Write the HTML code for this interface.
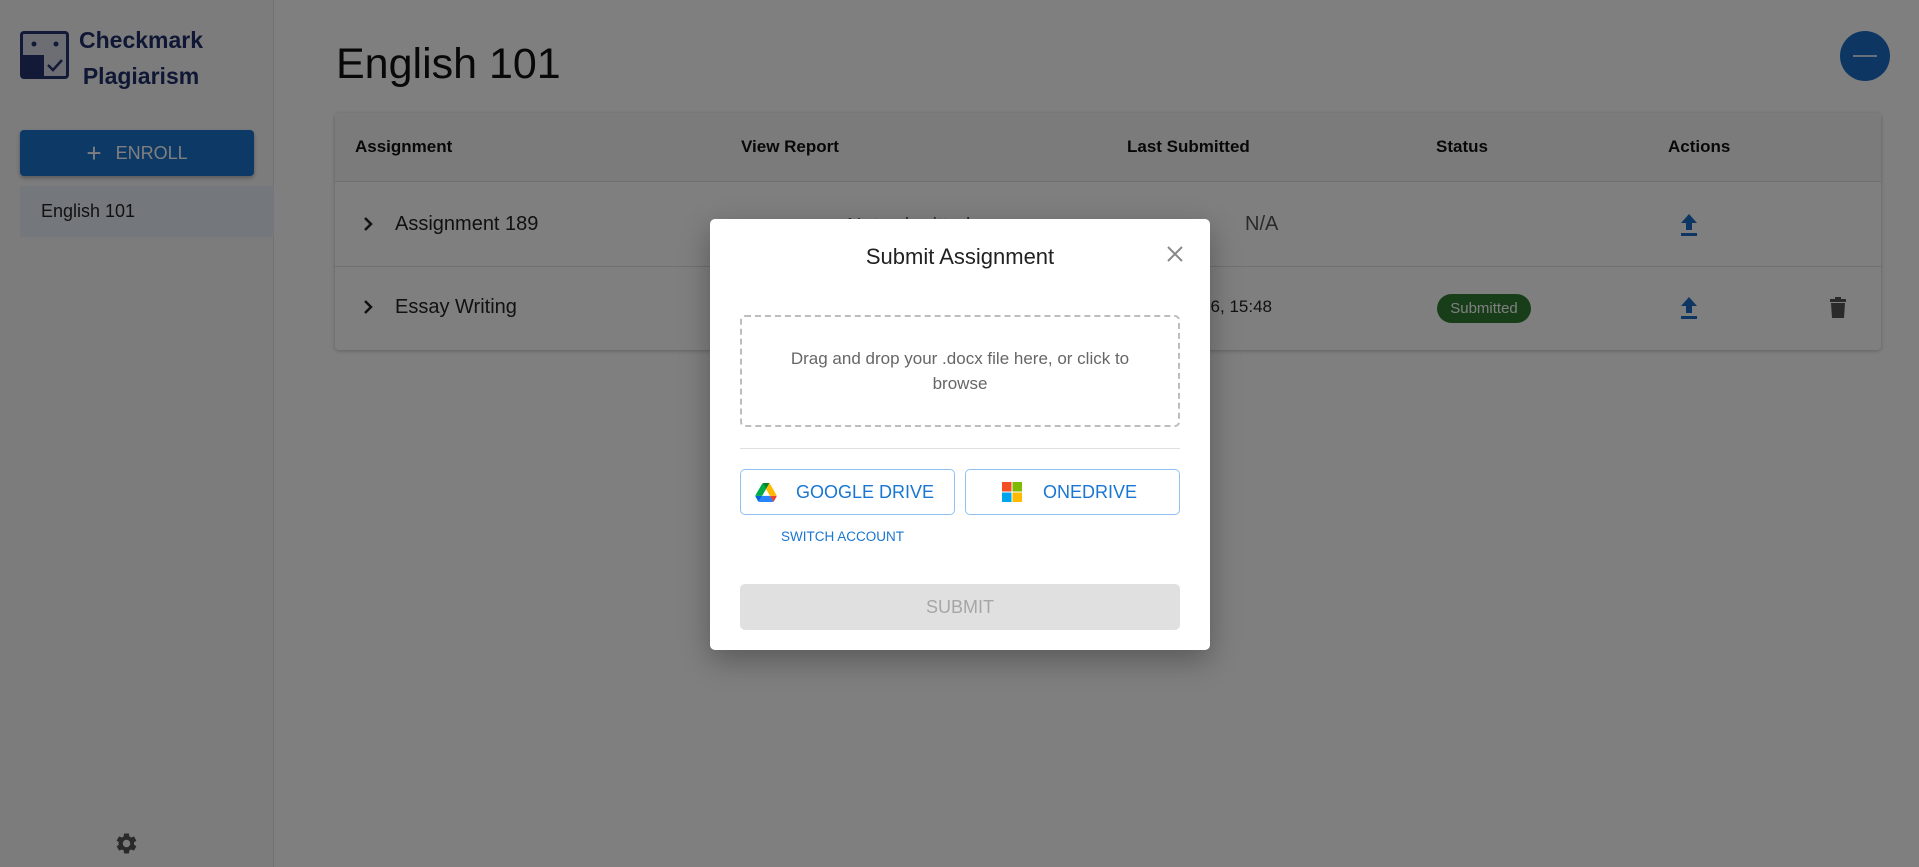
<!DOCTYPE html>
<html><head><meta charset="utf-8"><style>
*{margin:0;padding:0;box-sizing:border-box}
body{width:1919px;height:867px;position:relative;overflow:hidden;background:#fff;font-family:"Liberation Sans",Arial,sans-serif;color:#222}
.a{position:absolute}
.side{left:0;top:0;width:274px;height:867px;background:#f8f9fb;border-right:1px solid #e0e0e0}
.th{font-weight:bold;font-size:17px;color:#111;top:137px}
.cell{font-size:20px;color:#222}
.ov{left:0;top:0;width:1919px;height:867px;background:rgba(0,0,0,0.5)}
.modal{left:710px;top:219px;width:500px;height:431px;background:#fff;border-radius:5px;box-shadow:0 10px 30px rgba(0,0,0,.3)}
.btn{border:1px solid #90c2f0;border-radius:5px;height:46px;top:250px;color:#1976d2;font-size:18px;display:flex;align-items:center;white-space:nowrap}
</style></head><body>
<div class="a side"></div>
<svg class="a" style="left:20px;top:31px" width="49" height="48" viewBox="0 0 49 48">
<rect x="0" y="0" width="49" height="48" rx="4" fill="#24356f"/>
<rect x="3" y="3" width="43" height="42" rx="1" fill="#d9dde8"/>
<rect x="3" y="24" width="21" height="21" fill="#24356f"/>
<circle cx="14" cy="13" r="2.5" fill="#24356f"/><circle cx="36" cy="13" r="2.5" fill="#24356f"/>
<path d="M28 34 l5 5 l9 -10" stroke="#24356f" stroke-width="2.5" fill="none"/>
</svg>
<div class="a" style="left:79px;top:22px;line-height:36px;color:#1e2f6b;text-align:center;font-size:23px;font-weight:bold">Checkmark<br>Plagiarism</div>
<div class="a" style="left:20px;top:130px;width:234px;height:46px;background:#1a73cc;border-radius:4px;box-shadow:0 2px 4px rgba(0,0,0,.3);color:#fff;font-size:18px;display:flex;align-items:center;justify-content:center"><span style="font-size:26px;margin-right:14px;font-weight:300">+</span>ENROLL</div>
<div class="a" style="left:20px;top:186px;width:254px;height:51px;background:#e9f1fa"></div>
<div class="a" style="left:41px;top:186px;line-height:51px;font-size:18px;color:#222">English 101</div>
<svg class="a" style="left:114px;top:831px" width="25" height="25" viewBox="0 0 24 24"><path fill="#555" d="M19.14 12.94c.04-.3.06-.61.06-.94 0-.32-.02-.64-.07-.94l2.03-1.58a.49.49 0 0 0 .12-.61l-1.92-3.32a.49.49 0 0 0-.59-.22l-2.390.96c-.5-.38-1.03-.7-1.62-.94l-.36-2.54a.48.48 0 0 0-.48-.41h-3.84c-.24 0-.43.17-.47.41l-.36 2.54c-.59.24-1.13.57-1.62.94l-2.39-.96a.49.49 0 0 0-.59.22L2.74 8.87c-.12.21-.8.47.12.61l2.03 1.58c-.5.3-.7.63-.7.94s.2.64.7.94l-2.03 1.58a.49.49 0 0 0-.12.61l1.92 3.32c.12.22.37.29.59.22l2.39-.96c.5.38 1.03.7 1.62.94l.36 2.54c.5.24.24.41.48.41h3.840c.24 0 .44-.17.47-.41l.36-2.54c.59-.24 1.13-.56 1.62-.94l2.39.96c.22.08.47 0 .59-.22l1.92-3.32c.12-.22.07-.47-.12-.61l-2.01-1.58zM12 15.6A3.6 3.6 0 1 1 12 8.4a3.6 3.6 0 0 1 0 7.2z"/></svg>

<div class="a" style="left:336px;top:40px;font-size:43px;color:#111">English 101</div>
<div class="a" style="left:1840px;top:31px;width:50px;height:50px;border-radius:50%;background:#1a6fc4"><div class="a" style="left:13px;top:24px;width:24px;height:2px;background:#cfe0f5"></div></div>

<div class="a" style="left:335px;top:113px;width:1546px;height:237px;background:#fff;border-radius:4px;box-shadow:0 1px 4px rgba(0,0,0,.25)">
<div class="a" style="left:0;top:0;width:100%;height:69px;background:#f7f7f7;border-bottom:1px solid #e0e0e0"></div>
<div class="a" style="left:0;top:153px;width:100%;height:1px;background:#e0e0e0"></div>
</div>
<div class="a th" style="left:355px">Assignment</div>
<div class="a th" style="left:741px">View Report</div>
<div class="a th" style="left:1127px">Last Submitted</div>
<div class="a th" style="left:1436px">Status</div>
<div class="a th" style="left:1668px">Actions</div>
<svg class="a" style="left:362px;top:215px" width="14" height="18" viewBox="0 0 14 18"><path d="M3 3l6 6-6 6" stroke="#222" stroke-width="2.5" fill="none"/></svg>
<svg class="a" style="left:362px;top:298px" width="14" height="18" viewBox="0 0 14 18"><path d="M3 3l6 6-6 6" stroke="#222" stroke-width="2.5" fill="none"/></svg>
<div class="a cell" style="left:395px;top:213px">Assignment 189</div>
<div class="a cell" style="left:395px;top:296px">Essay Writing</div>
<div class="a cell" style="left:847px;top:215px;color:#555">Not submitted</div>
<div class="a cell" style="left:1245px;top:213px;color:#555">N/A</div>
<div class="a" style="left:1100px;top:297px;width:172px;text-align:right;font-size:17px;color:#222">06/03/2026, 15:48</div>
<div class="a" style="left:1437px;top:294px;width:94px;height:29px;border-radius:15px;background:#2e7d32;color:#fff;font-size:15px;text-align:center;line-height:29px">Submitted</div>
<svg class="a" style="left:1678px;top:212px" width="22" height="26" viewBox="0 0 22 26"><path d="M11 2l-8 9h5v7h6v-7h5z" fill="#1a6fc4"/><rect x="3" y="21" width="16" height="3" fill="#1a6fc4"/></svg>
<svg class="a" style="left:1678px;top:295px" width="22" height="26" viewBox="0 0 22 26"><path d="M11 2l-8 9h5v7h6v-7h5z" fill="#1a6fc4"/><rect x="3" y="21" width="16" height="3" fill="#1a6fc4"/></svg>
<svg class="a" style="left:1829px;top:296px" width="18" height="24" viewBox="0 0 18 24"><rect x="1" y="3" width="16" height="3" fill="#555"/><rect x="6" y="1" width="6" height="3" fill="#555"/><path d="M2 7h14l-1 15H3z" fill="#555"/></svg>

<div class="a ov"></div>

<div class="a modal">
<div class="a" style="left:0;top:25px;width:100%;text-align:center;font-size:22px;color:#222">Submit Assignment</div>
<svg class="a" style="left:455px;top:25px" width="20" height="20" viewBox="0 0 20 20"><path d="M3 3l14 14M17 3L3 17" stroke="#888" stroke-width="2"/></svg>
<div class="a" style="left:30px;top:96px;width:440px;height:112px;border:2px dashed #bdbdbd;border-radius:5px;display:flex;align-items:center;justify-content:center;text-align:center;font-size:17px;line-height:25px;color:#666;padding:0 40px">Drag and drop your .docx file here, or click to browse</div>
<div class="a" style="left:30px;top:229px;width:440px;height:1px;background:#e0e0e0"></div>
<div class="a btn" style="left:30px;width:215px">
<svg style="margin-left:14px" width="22" height="19" viewBox="0 0 87 78"><path d="M6.6 66.85l3.85 6.65c.8 1.4 1.95 2.5 3.3 3.3L27.5 53H0c0 1.55.4 3.1 1.2 4.5z" fill="#0066da"/><path d="M43.65 25L29.9 1.2c-1.35.8-2.5 1.9-3.3 3.3L1.2 48.5A9 9 0 0 0 0 53h27.5z" fill="#00ac47"/><path d="M73.55 76.8c1.350-.8 2.5-1.9 3.3-3.3l1.6-2.75 7.65-13.25c.8-1.4 1.2-2.95 1.2-4.5H59.8l5.85 11.5z" fill="#ea4335"/><path d="M43.65 25L57.4 1.2C56.05.4 54.5 0 52.9 0H34.4c-1.6 0-3.15.45-4.5 1.2z" fill="#00832d"/><path d="M59.8 53H27.5L13.75 76.8c1.35.8 2.9 1.2 4.5 1.2h50.8c1.6 0 3.15-.45 4.5-1.2z" fill="#2684fc"/><path d="M73.4 26.5L60.7 4.5c-.8-1.4-1.95-2.5-3.3-3.3L43.65 25 59.8 53h27.45c0-1.55-.4-3.1-1.2-4.5z" fill="#ffba00"/></svg>
<span style="margin-left:19px">GOOGLE DRIVE</span></div>
<div class="a btn" style="left:255px;width:215px">
<svg style="margin-left:36px" width="20" height="20" viewBox="0 0 20 20"><rect width="9.5" height="9.5" fill="#f25022"/><rect x="10.5" width="9.5" height="9.5" fill="#7fba00"/><rect y="10.5" width="9.5" height="9.5" fill="#00a4ef"/><rect x="10.5" y="10.5" width="9.5" height="9.5" fill="#ffb900"/></svg>
<span style="margin-left:21px">ONEDRIVE</span></div>
<div class="a" style="left:71px;top:310px;font-size:13.5px;color:#1976d2">SWITCH ACCOUNT</div>
<div class="a" style="left:30px;top:365px;width:440px;height:46px;background:#e0e0e0;border-radius:5px;text-align:center;line-height:46px;font-size:18px;color:#a6a6a6">SUBMIT</div>
</div>
</body></html>
